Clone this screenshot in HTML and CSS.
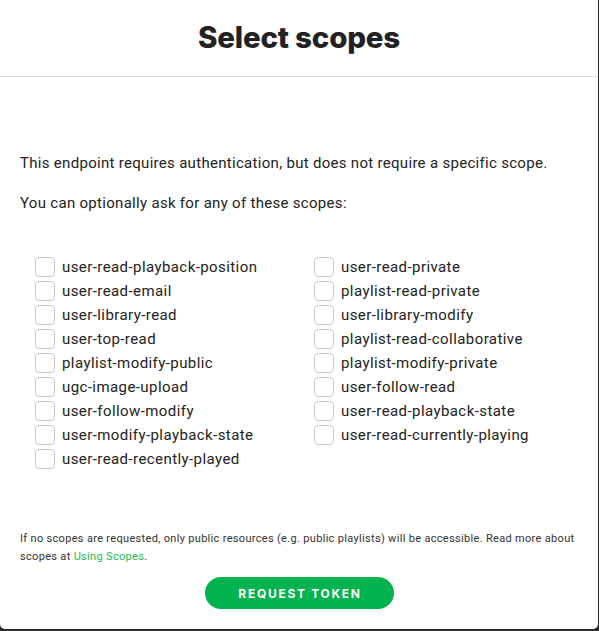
FILE: index.html
```html
<!DOCTYPE html>
<html>
<head>
<meta charset="utf-8">
<link rel="stylesheet" href="styles.css">
</head>
<body>
<div class="modal">
  <header class="modal-header">
    <h1 class="title">Select scopes</h1>
  </header>
  <div class="modal-body">
    <p class="lead first">This endpoint requires authentication, but does not require a specific scope.</p>
    <p class="lead">You can optionally ask for any of these scopes:</p>
    <div class="scopes">
      <div class="col">
        <label class="scope"><span class="box"></span>user-read-playback-position</label>
        <label class="scope"><span class="box"></span>user-read-email</label>
        <label class="scope"><span class="box"></span>user-library-read</label>
        <label class="scope"><span class="box"></span>user-top-read</label>
        <label class="scope"><span class="box"></span>playlist-modify-public</label>
        <label class="scope"><span class="box"></span>ugc-image-upload</label>
        <label class="scope"><span class="box"></span>user-follow-modify</label>
        <label class="scope"><span class="box"></span>user-modify-playback-state</label>
        <label class="scope"><span class="box"></span>user-read-recently-played</label>
      </div>
      <div class="col">
        <label class="scope"><span class="box"></span>user-read-private</label>
        <label class="scope"><span class="box"></span>playlist-read-private</label>
        <label class="scope"><span class="box"></span>user-library-modify</label>
        <label class="scope"><span class="box"></span>playlist-read-collaborative</label>
        <label class="scope"><span class="box"></span>playlist-modify-private</label>
        <label class="scope"><span class="box"></span>user-follow-read</label>
        <label class="scope"><span class="box"></span>user-read-playback-state</label>
        <label class="scope"><span class="box"></span>user-read-currently-playing</label>
      </div>
    </div>
    <p class="note">If no scopes are requested, only public resources (e.g. public playlists) will be accessible. Read more about scopes at <a class="link" href="#">Using Scopes</a>.</p>
    <div class="actions">
      <button class="btn">REQUEST TOKEN</button>
    </div>
  </div>
</div>
</body>
</html>
```
FILE: styles.css
```css
html, body {
  margin: 0;
  padding: 0;
}
body {
  background: #2b2b2b;
  width: 599px;
  height: 631px;
  overflow: hidden;
  font-family: "Roboto", "Liberation Sans", sans-serif;
  color: #222;
}
.modal {
  width: 598px;
  height: 629px;
  background: #fff;
  border-radius: 0 0 5px 5px;
  display: flex;
  flex-direction: column;
}
.modal-header {
  height: 76px;
  border-bottom: 1px solid #dedede;
  display: flex;
  align-items: center;
  justify-content: center;
}
.title {
  margin: 0;
  font-family: "Inter", "Liberation Sans", sans-serif;
  font-weight: 800;
  font-size: 29.5px;
  letter-spacing: -0.2px;
  color: #222;
  padding-bottom: 2px;
}
.modal-body {
  padding: 0 20px;
  display: flex;
  flex-direction: column;
}
.lead {
  margin: 0;
  font-size: 15px;
  line-height: 22px;
  letter-spacing: 0.3px;
  color: #222;
}
.lead.first {
  margin-top: 75px;
  margin-bottom: 18px;
}
.scopes {
  margin-top: 41px;
  padding-left: 15px;
  display: flex;
}
.col {
  width: 279px;
  flex-shrink: 0;
  display: flex;
  flex-direction: column;
}
.scope {
  height: 24px;
  display: flex;
  align-items: center;
  font-size: 15px;
  letter-spacing: 0.42px;
  color: #222;
  white-space: nowrap;
}
.box {
  box-sizing: border-box;
  width: 20px;
  height: 20px;
  flex-shrink: 0;
  border: 1px solid #c8c8c8;
  border-radius: 4px;
  margin-right: 7px;
}
.note {
  margin: 59px 0 0;
  font-size: 11px;
  line-height: 18px;
  letter-spacing: 0.32px;
  color: #333;
}
.link {
  color: #1db954;
  text-decoration: none;
}
.actions {
  display: flex;
  justify-content: center;
  margin-top: 11px;
}
.btn {
  width: 189px;
  height: 32px;
  border: none;
  border-radius: 16px;
  background: #00b34f;
  color: #fff;
  font-family: "Inter", "Liberation Sans", sans-serif;
  font-weight: 700;
  font-size: 12px;
  letter-spacing: 1.7px;
  padding: 0 0 0 2px;
}
```
